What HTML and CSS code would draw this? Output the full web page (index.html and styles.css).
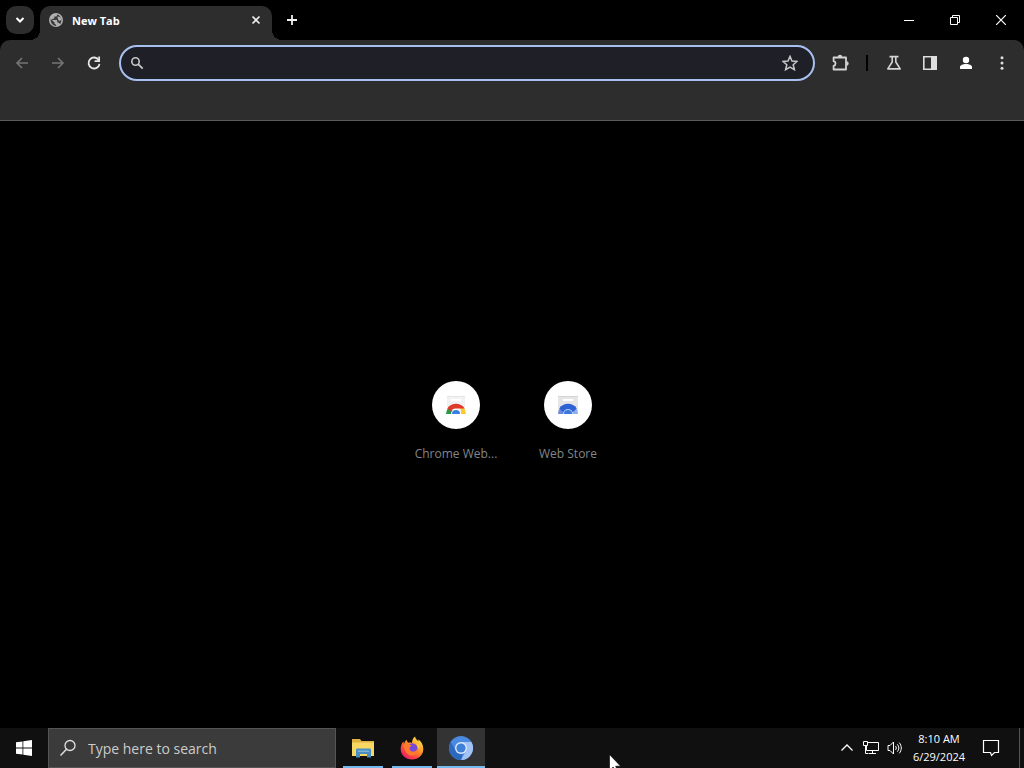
FILE: index.html
```html
<!DOCTYPE html>
<html lang="en">
<head>
  <meta charset="UTF-8">
  <title>New Tab</title>
  <meta name="viewport" content="width=device-width, initial-scale=1.0">
  <link rel="stylesheet" href="styles.css">
</head>
<body>

  <header class="browser">
    <div class="tab-strip">
      <button class="tab-search" aria-label="Search tabs">
        <svg width="12" height="12" viewBox="0 0 12 12"><path d="M2.500 4l3.500 3.500L9.500 4" fill="none" stroke="#fff" stroke-width="2"/></svg>
      </button>
      <div class="tab">
        <svg width="16" height="16" viewBox="0 0 16 16">
          <circle cx="8" cy="8" r="7" fill="#b0b0b0"/>
          <path d="M2.600 6.800l4 3.700v1.200l1.500 1v1.200C4.800 13.800 2.200 11 2.600 6.800zM9 2.400v.8c0 .8-.6 1.400-1.400 1.400H6.300V6c0 .4-.3.700-.7.700H4.200v1.200h4.300c.4 0 .7.300.7.700v1.800h.8c.6 0 1.200.4 1.400 1l.8.5c2.400-3.200 1.400-8.300-3.200-9.500z" fill="#3c3c3c"/>
          <path d="M9.500 4.500l3 .5.800 3-1.800 1-1.500-1.500z" fill="#b0b0b0"/>
        </svg>
        <span class="tab-title">New Tab</span>
        <button class="tab-close" aria-label="Close tab">
          <svg width="10" height="10" viewBox="0 0 10 10"><path d="M1.500 1.500l7 7M8.500 1.500l-7 7" stroke="#f0f0f0" stroke-width="1.600"/></svg>
        </button>
      </div>
      <button class="new-tab" aria-label="New tab">
        <svg width="12" height="12" viewBox="0 0 12 12"><path d="M6 1v10M1 6h10" stroke="#f0f0f0" stroke-width="1.800"/></svg>
      </button>
      <div class="window-controls">
        <button aria-label="Minimize"><svg width="10" height="10" viewBox="0 0 10 10"><path d="M0 5.500h10" stroke="#fff"/></svg></button>
        <button aria-label="Restore"><svg width="10" height="10" viewBox="0 0 10 10"><path d="M.5 2.500h7v7h-7zM2.500 2.500v-2h7v7h-2" fill="none" stroke="#fff"/></svg></button>
        <button aria-label="Close"><svg width="10" height="10" viewBox="0 0 10 10"><path d="M0 0l10 10M10 0L0 10" stroke="#fff" stroke-width="1.200"/></svg></button>
      </div>
    </div>

    <div class="toolbar">
      <button class="tool" aria-label="Back" disabled>
        <svg width="16" height="16" viewBox="0 0 16 16"><path d="M14 8H3M8 3L3 8l5 5" fill="none" stroke="#757575" stroke-width="1.600"/></svg>
      </button>
      <button class="tool" aria-label="Forward" disabled>
        <svg width="16" height="16" viewBox="0 0 16 16"><path d="M2 8h11M8 3l5 5-5 5" fill="none" stroke="#757575" stroke-width="1.600"/></svg>
      </button>
      <button class="tool" aria-label="Reload">
        <svg width="16" height="16" viewBox="0 0 16 16"><path d="M12.800 5.200A5.500 5.500 0 1 0 13.500 8.800" fill="none" stroke="#e8e8e8" stroke-width="1.800"/><path d="M14 1.500V7H8.600V5.300h3.700V1.500z" fill="#e8e8e8"/></svg>
      </button>

      <div class="omnibox">
        <svg width="14" height="14" viewBox="0 0 14 14"><circle cx="5.500" cy="5.500" r="3.700" fill="none" stroke="#c7c7c7" stroke-width="1.600"/><path d="M8.200 8.200l4.500 4.500" stroke="#c7c7c7" stroke-width="1.800"/></svg>
        <input type="text" class="address" aria-label="Address and search bar">
        <button class="bookmark" aria-label="Bookmark this tab">
          <svg width="16" height="16" viewBox="0 0 16 16"><path d="M8 1.400l2 4.600 5 .5-3.800 3.300 1.200 4.900L8 12.100l-4.400 2.600 1.200-4.900L1 6.500 6 6z" fill="none" stroke="#c7c7c7" stroke-width="1.500"/></svg>
        </button>
      </div>

      <button class="tool" aria-label="Extensions">
        <svg width="18" height="18" viewBox="0 0 18 18"><path d="M2.600 3.500H15v12H2.600v-3.700c2.600-.6 2.600-4 0-4.600z" fill="none" stroke="#d4d4d4" stroke-width="1.800" stroke-linejoin="round"/><path d="M6.800 3a2.200 2.200 0 0 1 4.400 0zM15.500 7.300a2.200 2.200 0 0 1 0 4.400z" fill="#d4d4d4"/></svg>
      </button>
      <span class="separator"></span>
      <button class="tool" aria-label="Experiments">
        <svg width="16" height="16" viewBox="0 0 16 16"><path d="M3.500 1.600h9M6.200 2v5L1.800 13.900h12.400L9.800 7V2" fill="none" stroke="#d4d4d4" stroke-width="1.600" stroke-linejoin="round"/></svg>
      </button>
      <button class="tool" aria-label="Side panel">
        <svg width="16" height="16" viewBox="0 0 16 16"><path d="M1.800 1.800h12.400v12.400H1.800z" fill="none" stroke="#dedede" stroke-width="1.600"/><path d="M9 1h6v14H9z" fill="#dedede"/></svg>
      </button>
      <button class="tool" aria-label="Profile">
        <svg width="14" height="14" viewBox="0 0 14 14"><circle cx="7" cy="4" r="3.200" fill="#fff"/><path d="M1 13v-2c0-1.800 3-3 6-3s6 1.200 6 3v2z" fill="#fff"/></svg>
      </button>
      <button class="tool" aria-label="Menu">
        <svg width="16" height="16" viewBox="0 0 16 16" fill="#dedede"><circle cx="8" cy="2.800" r="1.500"/><circle cx="8" cy="8" r="1.500"/><circle cx="8" cy="13.200" r="1.500"/></svg>
      </button>
    </div>
    <div class="bookmark-bar"></div>
  </header>

  <main class="page">
    <a class="shortcut" href="#">
      <span class="shortcut-icon">
        <svg width="24" height="24" viewBox="0 0 24 24">
          <path d="M3 3h18v18H3z" fill="#f2f2f2"/>
          <path d="M3 3h18v1H3z" fill="#e4e4e4"/>
          <path d="M7 6h10v2H7z" fill="#fff"/>
          <path d="M2 21a10 10 0 0 1 3-7l4 4a4 4 0 0 0-1 3z" fill="#249a4b"/>
          <path d="M22 21a10 10 0 0 0-2.500-6.800H13A4 4 0 0 1 16 21z" fill="#fbc934"/>
          <path d="M3.300 15.500C7 9.300 17 9.300 20.700 15.500H12a5 5 0 0 0-5 3z" fill="#df3b2c"/>
          <path d="M7 21a5 5 0 0 1 10 0z" fill="#fff"/>
          <path d="M8 21a4 4 0 0 1 8 0z" fill="#377de2"/>
        </svg>
      </span>
      <span class="shortcut-label">Chrome Web...</span>
    </a>
    <a class="shortcut" href="#">
      <span class="shortcut-icon">
        <svg width="24" height="24" viewBox="0 0 24 24">
          <path d="M2 3h20v18H2z" fill="#e6e6e6"/>
          <path d="M2 3h20v1H2z" fill="#d4d4d4"/>
          <path d="M7 6h10v2H7z" fill="#fff"/>
          <path d="M2 21a10 10 0 0 1 3-7l4 4a4 4 0 0 0-1 3z" fill="#6689e6"/>
          <path d="M22 21a10 10 0 0 0-2.500-6.800H13A4 4 0 0 1 16 21z" fill="#8fb0f0"/>
          <path d="M3.300 15.500C7 9.300 17 9.300 20.700 15.500L17 19H7z" fill="#2f62d4"/>
          <path d="M7 21a5 5 0 0 1 10 0z" fill="#b5cdf8"/>
          <path d="M8 21a4 4 0 0 1 8 0z" fill="#3c78dc"/>
        </svg>
      </span>
      <span class="shortcut-label">Web Store</span>
    </a>
  </main>

  <footer class="taskbar">
    <button class="start" aria-label="Start">
      <svg width="16" height="16" viewBox="0 0 16 16" fill="#fff"><path d="M0 2.300l6.500-.9v6.100H0zM7.300 1.300L16 0v7.500H7.300zM0 8.400h6.500v6.200L0 13.700zM7.300 8.400H16V16l-8.700-1.300z"/></svg>
    </button>
    <label class="search">
      <svg width="18" height="18" viewBox="0 0 18 18"><circle cx="11" cy="6.500" r="5" fill="none" stroke="#e0e0e0" stroke-width="1.300"/><path d="M7.500 10.200L1.500 16.500" stroke="#e0e0e0" stroke-width="1.500"/></svg>
      <input type="text" class="search-input" placeholder="Type here to search" aria-label="Type here to search">
    </label>

    <nav class="apps">
      <button class="app" aria-label="File Explorer">
        <svg width="24" height="24" viewBox="0 0 24 24">
          <path d="M1 3h8l1.500 2H23v15H1z" fill="#e0b040"/>
          <path d="M1 6.500h22V20H1z" fill="#f8d863"/>
          <path d="M5 14c0-.8.500-1.500 1.500-1.500h12c1 0 1.500.7 1.500 1.500v7.500h-4V18H9v3.500H5z" fill="#4a8fc4"/>
          <path d="M7 14.500h11v1.500H7z" fill="#7db4d8"/>
        </svg>
      </button>
      <button class="app" aria-label="Firefox">
        <svg width="24" height="24" viewBox="0 0 24 24">
          <defs>
            <linearGradient id="fox" x1="0.850" y1="0.100" x2="0.200" y2="0.950"><stop offset="0" stop-color="#ffe14a"/><stop offset=".45" stop-color="#ff8a25"/><stop offset=".75" stop-color="#ff4045"/><stop offset="1" stop-color="#e5226c"/></linearGradient>
          </defs>
          <path d="M15 .5c.4 2.300 2 3.400 3.300 5 .2-.8 0-1.500-.3-2.200 3.300 2 5.300 5.700 5.300 9.700 0 6-5 10.500-11.300 10.500S.7 19 .7 13c0-3 1-5.600 2.600-7.600L4 8c.5-1.700 1.500-3.200 2.800-4.200 0 1.200.5 2.200 1.400 3 1.500-.4 2.700-.2 3.800.2 0-2.800 1-5.200 3-6.500z" fill="url(#fox)"/>
          <circle cx="12.300" cy="12.500" r="5.200" fill="#7848d8"/>
          <path d="M3.500 9c2-1.700 4.200-1.800 6-.6.600.4 1.400.5 2.200.6-.3 1.300-1 1.500-1.900 2-.8 2.800.8 5 4 4.600 2-.2 3.200-1.700 3.700-3 .6 4.300-2 7-5.700 7C7 19.600 4.500 15 3.500 9z" fill="#ff7a2c"/>
          <path d="M15.500 7c2.500 1.500 3.200 4.200 2.200 6.800 1-1 1.600-3 1.100-5z" fill="#ffdc46"/>
        </svg>
      </button>
      <button class="app active" aria-label="Chromium">
        <svg width="24" height="24" viewBox="0 0 24 24">
          <circle cx="12" cy="12" r="12" fill="#4a8ae0"/>
          <path d="M12 6h10.400A12 12 0 0 1 12 24l5-9z" fill="#a3c3f4"/>
          <path d="M1.700 6l5.300 9a6 6 0 0 0 6.500 2.800L12 24A12 12 0 0 1 1.700 6z" fill="#2c68be"/>
          <circle cx="12" cy="12" r="6" fill="#dfeafb"/>
          <circle cx="12" cy="12" r="4.600" fill="#3f80da"/>
        </svg>
      </button>
    </nav>

    <div class="tray">
      <button class="tray-icon" aria-label="Show hidden icons">
        <svg width="14" height="14" viewBox="0 0 14 14"><path d="M1.500 9.500L7 4l5.500 5.500" fill="none" stroke="#fff" stroke-width="1.300"/></svg>
      </button>
      <button class="tray-icon" aria-label="Network">
        <svg width="18" height="16" viewBox="0 0 18 16"><path d="M6 2.500h10.500v8H4.500V6M10.500 10.500v3M7 13.500h7M1.500 1.500h4v4h-4zM3.500 5.500v8h3" fill="none" stroke="#fff"/></svg>
      </button>
      <button class="tray-icon" aria-label="Volume">
        <svg width="16" height="16" viewBox="0 0 16 16"><path d="M1 5.500h2L6.500 2v12L3 10.500H1zM8.500 6c1 1.200 1 2.800 0 4M10.300 4.300c2 2.200 2 5.200 0 7.400M12.200 2.600c2.800 3.200 2.800 7.600 0 10.800" fill="none" stroke="#fff"/></svg>
      </button>
      <button class="clock"><span>8:10 AM</span><span>6/29/2024</span></button>
      <button class="notifications" aria-label="Notifications">
        <svg width="18" height="18" viewBox="0 0 18 18"><path d="M1.500 1.500h15v12h-4l-3 3-1-3h-7z" fill="none" stroke="#fff" stroke-width="1.200"/></svg>
      </button>
      <button class="show-desktop" aria-label="Show desktop"></button>
    </div>
  </footer>

  <svg class="cursor" width="12" height="19" viewBox="0 0 12 19"><path d="M.5.500v16l3.700-3.500 2.500 5.500 2.300-1-2.400-5.300h5z" fill="#fff" stroke="#000" stroke-width=".6"/></svg>

</body>
</html>
```

FILE: styles.css
```css
:root {
  --frame: #000;
  --toolbar: #2d2d2d;
  --focus: #a8c0f0;
  --taskbar: #101010;
  --underline: #76b9ed;
}

* {
  box-sizing: border-box;
}

body {
  margin: 0;
  height: 100vh;
  display: flex;
  flex-direction: column;
  overflow: hidden;
  background: #000;
  color: #fff;
  font-family: "Open Sans", "Noto Sans", sans-serif;
  font-size: 12px;
}

button {
  display: flex;
  align-items: center;
  justify-content: center;
  flex: none;
  margin: 0;
  padding: 0;
  border: none;
  background: none;
  color: inherit;
  font: inherit;
}

svg {
  display: block;
  flex: none;
}

input {
  flex: 1;
  min-width: 0;
  border: none;
  outline: none;
  background: none;
  color: #fff;
  font: inherit;
}

/* tabs */
.tab-strip {
  display: flex;
  height: 40px;
  padding: 6px 0 0 6px;
  background: var(--frame);
}

.tab-search {
  width: 28px;
  height: 28px;
  border-radius: 10px;
  background: var(--toolbar);
}

.tab {
  position: relative;
  display: flex;
  align-items: center;
  gap: 8px;
  width: 232px;
  margin-left: 6px;
  padding: 0 8px 6px;
  border-radius: 10px 10px 0 0;
  background: var(--toolbar);
}

/* curved feet of the active tab */
.tab::before,
.tab::after {
  content: "";
  position: absolute;
  bottom: 0;
  width: 10px;
  height: 10px;
}

.tab::before {
  right: 100%;
  background: radial-gradient(circle at 0 0, transparent 10px, var(--toolbar) 10px);
}

.tab::after {
  left: 100%;
  background: radial-gradient(circle at 100% 0, transparent 10px, var(--toolbar) 10px);
}

.tab-title {
  flex: 1;
  font-size: 11px;
  font-weight: bold;
}

.tab-close {
  width: 16px;
  height: 16px;
}

.new-tab {
  width: 28px;
  height: 28px;
  margin-left: 6px;
}

.window-controls {
  display: flex;
  margin-left: auto;
}

.window-controls button {
  width: 46px;
  height: 28px;
}

/* toolbar */
.toolbar {
  display: flex;
  align-items: center;
  height: 46px;
  padding: 0 4px;
  border-radius: 10px 10px 0 0;
  background: var(--toolbar);
}

.tool {
  width: 36px;
  height: 36px;
}

.omnibox {
  display: flex;
  align-items: center;
  flex: 1;
  height: 36px;
  margin: 0 7px;
  padding: 0 15px 0 9px;
  gap: 8px;
  border: 2px solid var(--focus);
  border-radius: 18px;
  background: #1f1f27;
}

.separator {
  width: 2px;
  height: 16px;
  margin: 0 8px;
  background: #000;
}

.bookmark-bar {
  height: 35px;
  border-bottom: 1px solid #5a5a5a;
  background: var(--toolbar);
}

/* new tab page */
.page {
  flex: 1;
  display: flex;
  align-items: center;
  justify-content: center;
}

.shortcut {
  display: flex;
  flex-direction: column;
  align-items: center;
  gap: 16px;
  width: 112px;
  height: 112px;
  padding: 12px;
  color: #80868b;
  text-decoration: none;
}

.shortcut-icon {
  display: flex;
  align-items: center;
  justify-content: center;
  width: 48px;
  height: 48px;
  border-radius: 50%;
  background: #fff;
}

.shortcut-label {
  line-height: 18px;
  white-space: nowrap;
}

/* taskbar */
.taskbar {
  display: flex;
  height: 40px;
  background: var(--taskbar);
}

.start {
  width: 48px;
}

.search {
  display: flex;
  align-items: center;
  gap: 11px;
  width: 288px;
  padding: 0 12px 0 10px;
  border: 1px solid #555;
  background: #3b3b3b;
}

.search-input {
  padding: 0;
  font-size: 14px;
}

.search-input::placeholder {
  color: #ccc;
}

.apps {
  display: flex;
  gap: 1px;
  margin-left: 3px;
}

.app {
  position: relative;
  width: 48px;
}

.app::after {
  content: "";
  position: absolute;
  left: 4px;
  right: 4px;
  bottom: 0;
  height: 2px;
  background: var(--underline);
}

.app.active {
  background: #333;
}

.app.active::after {
  left: 0;
  right: 0;
}

.tray {
  display: flex;
  margin-left: auto;
}

.tray-icon {
  width: 24px;
}

.clock {
  flex-direction: column;
  width: 56px;
  margin-left: 4px;
  font-size: 11px;
  line-height: 18px;
}

.notifications {
  width: 48px;
}

.show-desktop {
  width: 5px;
  margin-left: 4px;
  border-left: 1px solid #555;
}

/* mouse pointer */
.cursor {
  position: absolute;
  left: 609px;
  top: 754px;
}
```
